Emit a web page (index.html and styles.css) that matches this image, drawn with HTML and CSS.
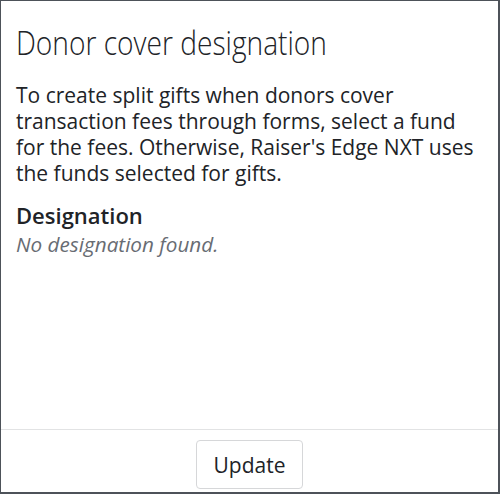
FILE: index.html
```html
<!DOCTYPE html>
<html>
<head>
<meta charset="utf-8">
<link rel="stylesheet" href="styles.css">
</head>
<body>
<div class="modal">
  <div class="content">
    <h1 class="title">Donor cover designation</h1>
    <p class="desc">To create split gifts when donors cover transaction fees through forms, select a fund for the fees. Otherwise, Raiser's Edge NXT uses the funds selected for gifts.</p>
    <h2 class="label">Designation</h2>
    <p class="empty">No designation found.</p>
  </div>
  <div class="footer">
    <button class="btn">Update</button>
  </div>
</div>
</body>
</html>
```

FILE: styles.css
```css
html, body {
  margin: 0;
  padding: 0;
  height: 100%;
}
body {
  font-family: "Open Sans", "Noto Sans", sans-serif;
  color: #212327;
  background: #fff;
}
.modal {
  box-sizing: border-box;
  width: 500px;
  height: 494px;
  border: 1px solid #4d5259;
  border-right-width: 2px;
  border-bottom-width: 2px;
  display: flex;
  flex-direction: column;
}
.content {
  flex: 1;
  padding: 0 15px;
}
.title {
  margin: 21px 0 0;
  font-size: 33.6px;
  font-weight: 300;
  line-height: 40px;
  white-space: nowrap;
  transform: scaleX(0.838);
  transform-origin: left center;
}
.desc {
  margin: 20px 0 0;
  font-size: 21px;
  line-height: 26px;
}
.label {
  margin: 15px 0 0;
  font-size: 22px;
  font-weight: 600;
  line-height: 29px;
}
.empty {
  margin: 0;
  font-size: 20.7px;
  font-style: italic;
  color: #686c73;
  line-height: 28px;
}
.footer {
  border-top: 1px solid #e2e3e4;
  display: flex;
  justify-content: center;
  align-items: flex-start;
  padding: 10px 0 0;
  height: 63px;
  box-sizing: border-box;
}
.btn {
  font-family: "Open Sans", "Noto Sans", sans-serif;
  font-size: 21px;
  color: #212327;
  background: #fff;
  border: 1px solid #d6d7d9;
  border-radius: 4px;
  width: 107px;
  height: 49px;
  padding: 0;
}
```
